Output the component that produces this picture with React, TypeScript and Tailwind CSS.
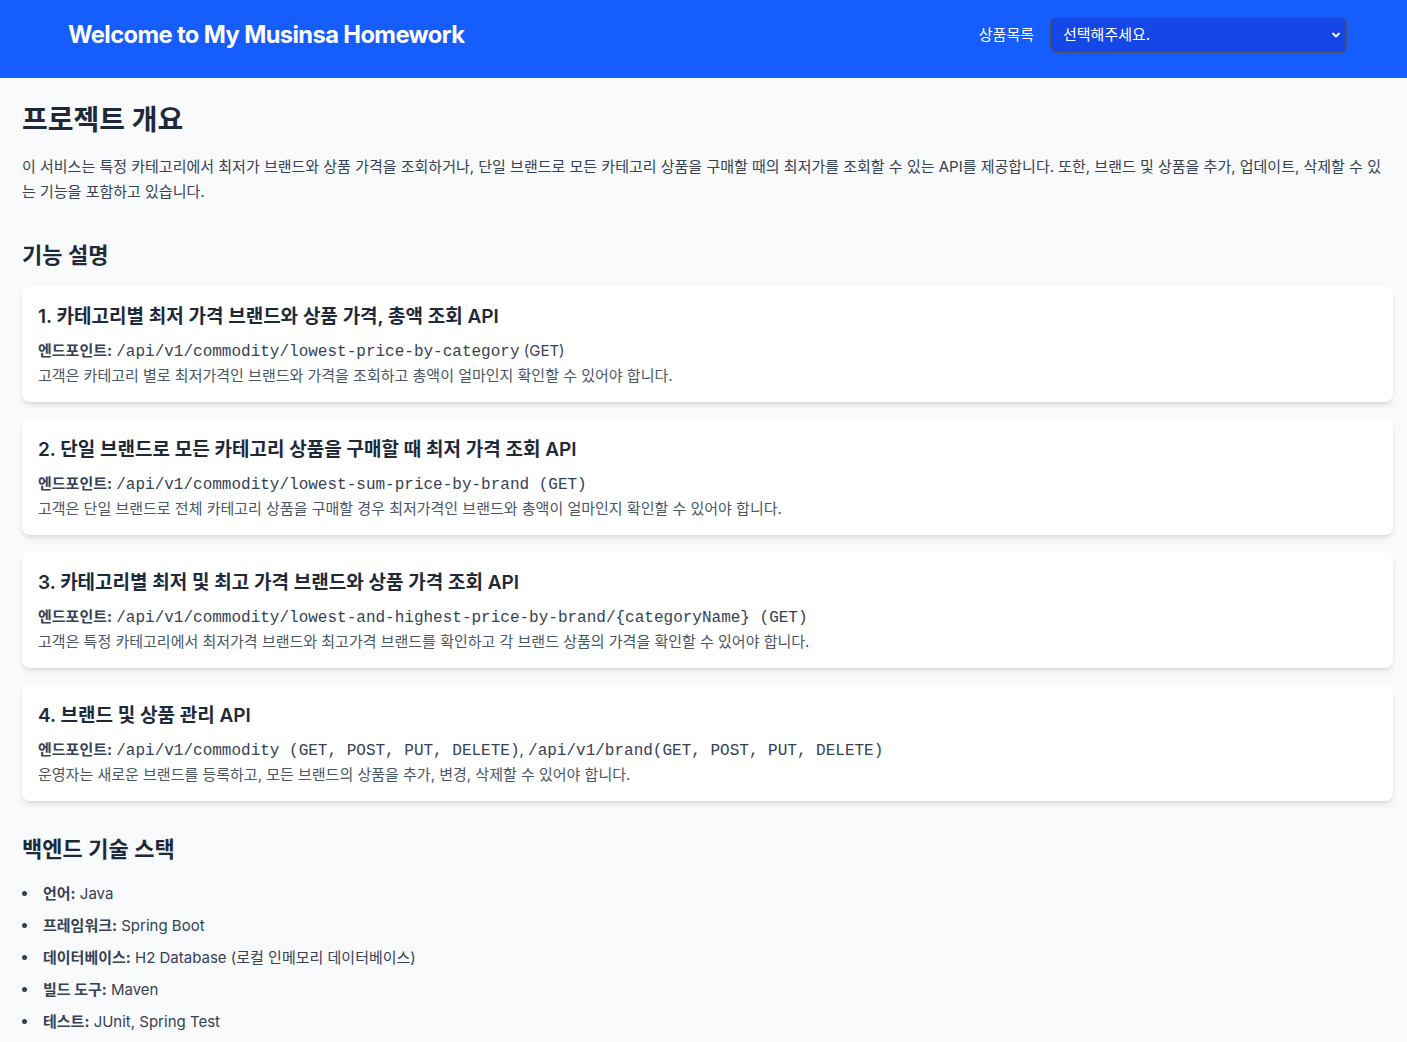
const features = [
  {
    title: "1. 카테고리별 최저 가격 브랜드와 상품 가격, 총액 조회 API",
    endpoint: "/api/v1/commodity/lowest-price-by-category",
    method: " (GET)",
    desc: "고객은 카테고리 별로 최저가격인 브랜드와 가격을 조회하고 총액이 얼마인지 확인할 수 있어야 합니다.",
  },
  {
    title: "2. 단일 브랜드로 모든 카테고리 상품을 구매할 때 최저 가격 조회 API",
    endpoint: "/api/v1/commodity/lowest-sum-price-by-brand (GET)",
    method: "",
    desc: "고객은 단일 브랜드로 전체 카테고리 상품을 구매할 경우 최저가격인 브랜드와 총액이 얼마인지 확인할 수 있어야 합니다.",
  },
  {
    title: "3. 카테고리별 최저 및 최고 가격 브랜드와 상품 가격 조회 API",
    endpoint: "/api/v1/commodity/lowest-and-highest-price-by-brand/{categoryName} (GET)",
    method: "",
    desc: "고객은 특정 카테고리에서 최저가격 브랜드와 최고가격 브랜드를 확인하고 각 브랜드 상품의 가격을 확인할 수 있어야 합니다.",
  },
];

const stack = [
  { label: "언어:", value: "Java" },
  { label: "프레임워크:", value: "Spring Boot" },
  { label: "데이터베이스:", value: "H2 Database (로컬 인메모리 데이터베이스)" },
  { label: "빌드 도구:", value: "Maven" },
  { label: "테스트:", value: "JUnit, Spring Test" },
];

const sans = "font-['Inter','Noto_Sans_CJK_KR',sans-serif]";
const mono = "font-['Liberation_Mono','Noto_Sans_CJK_KR',monospace] text-base leading-none";

export default function App() {
  return (
    <div className={`min-h-screen bg-gray-50 text-gray-800 ${sans}`}>
      <header className="h-[78px] bg-blue-600 pt-[17px] pl-[68px] pr-[60px]">
        <div className="flex items-center justify-between h-9">
          <h1 className="text-[23.7px] font-bold text-white tracking-tight">Welcome to My Musinsa Homework</h1>
          <div className="flex items-center">
            <span className="text-[15px] text-white mr-4">상품목록</span>
            <div className="relative">
              <select className="appearance-none w-[297px] h-9 rounded-md border border-gray-600 bg-blue-700 px-3 text-[15px] text-white outline-none">
                <option>선택해주세요.</option>
              </select>
              <svg className="absolute right-[6px] top-[14px] w-[10px] h-[8px] pointer-events-none" viewBox="0 0 10 8" fill="none" stroke="white" strokeWidth="1.8" strokeLinecap="round" strokeLinejoin="round">
                <path d="M2 2.5l3 3 3-3" />
              </svg>
            </div>
          </div>
        </div>
      </header>

      <main className="pt-6 pl-[22px] pr-[14px] pb-6">
        <h2 className="text-[28px] leading-9 font-bold mb-4">프로젝트 개요</h2>
        <p className="text-[15px] leading-[25px] text-gray-700">
          이 서비스는 특정 카테고리에서 최저가 브랜드와 상품 가격을 조회하거나, 단일 브랜드로 모든 카테고리 상품을 구매할 때의 최저가를 조회할 수 있는 API를 제공합니다. 또한, 브랜드 및 상품을 추가, 업데이트, 삭제할 수 있는 기능을 포함하고 있습니다.
        </p>

        <h2 className="text-[22px] leading-8 font-semibold mt-[35px] mb-[15px]">기능 설명</h2>
        <div className="space-y-[17px]">
          {features.map((f) => (
            <div key={f.title} className="bg-white rounded-lg shadow-md pt-[17px] px-4 pb-[14px]">
              <h3 className="text-[19px] leading-7 font-semibold mb-2">{f.title}</h3>
              <p className="h-6 text-[15px] leading-6 text-gray-700">
                <strong className="font-bold">엔드포인트:</strong> <code className={mono}>{f.endpoint}</code>
                {f.method}
              </p>
              <p className="h-[25px] text-[15px] leading-[25px] text-gray-600">{f.desc}</p>
            </div>
          ))}
          <div className="bg-white rounded-lg shadow-md pt-[17px] px-4 pb-[14px]">
            <h3 className="text-[19px] leading-7 font-semibold mb-2">4. 브랜드 및 상품 관리 API</h3>
            <p className="h-6 text-[15px] leading-6 text-gray-700">
              <strong className="font-bold">엔드포인트:</strong> <code className={mono}>/api/v1/commodity (GET, POST, PUT, DELETE)</code>,{" "}
              <code className={mono}>/api/v1/brand(GET, POST, PUT, DELETE)</code>
            </p>
            <p className="h-[25px] text-[15px] leading-[25px] text-gray-600">
              운영자는 새로운 브랜드를 등록하고, 모든 브랜드의 상품을 추가, 변경, 삭제할 수 있어야 합니다.
            </p>
          </div>
        </div>

        <h2 className="text-[22px] leading-8 font-semibold mt-[32px] mb-[17px]">백엔드 기술 스택</h2>
        <ul className="list-disc list-inside space-y-2 text-[15px] leading-6 text-gray-700">
          {stack.map((s) => (
            <li key={s.label}>
              <strong className="font-bold">{s.label}</strong> {s.value}
            </li>
          ))}
        </ul>
      </main>
    </div>
  );
}
